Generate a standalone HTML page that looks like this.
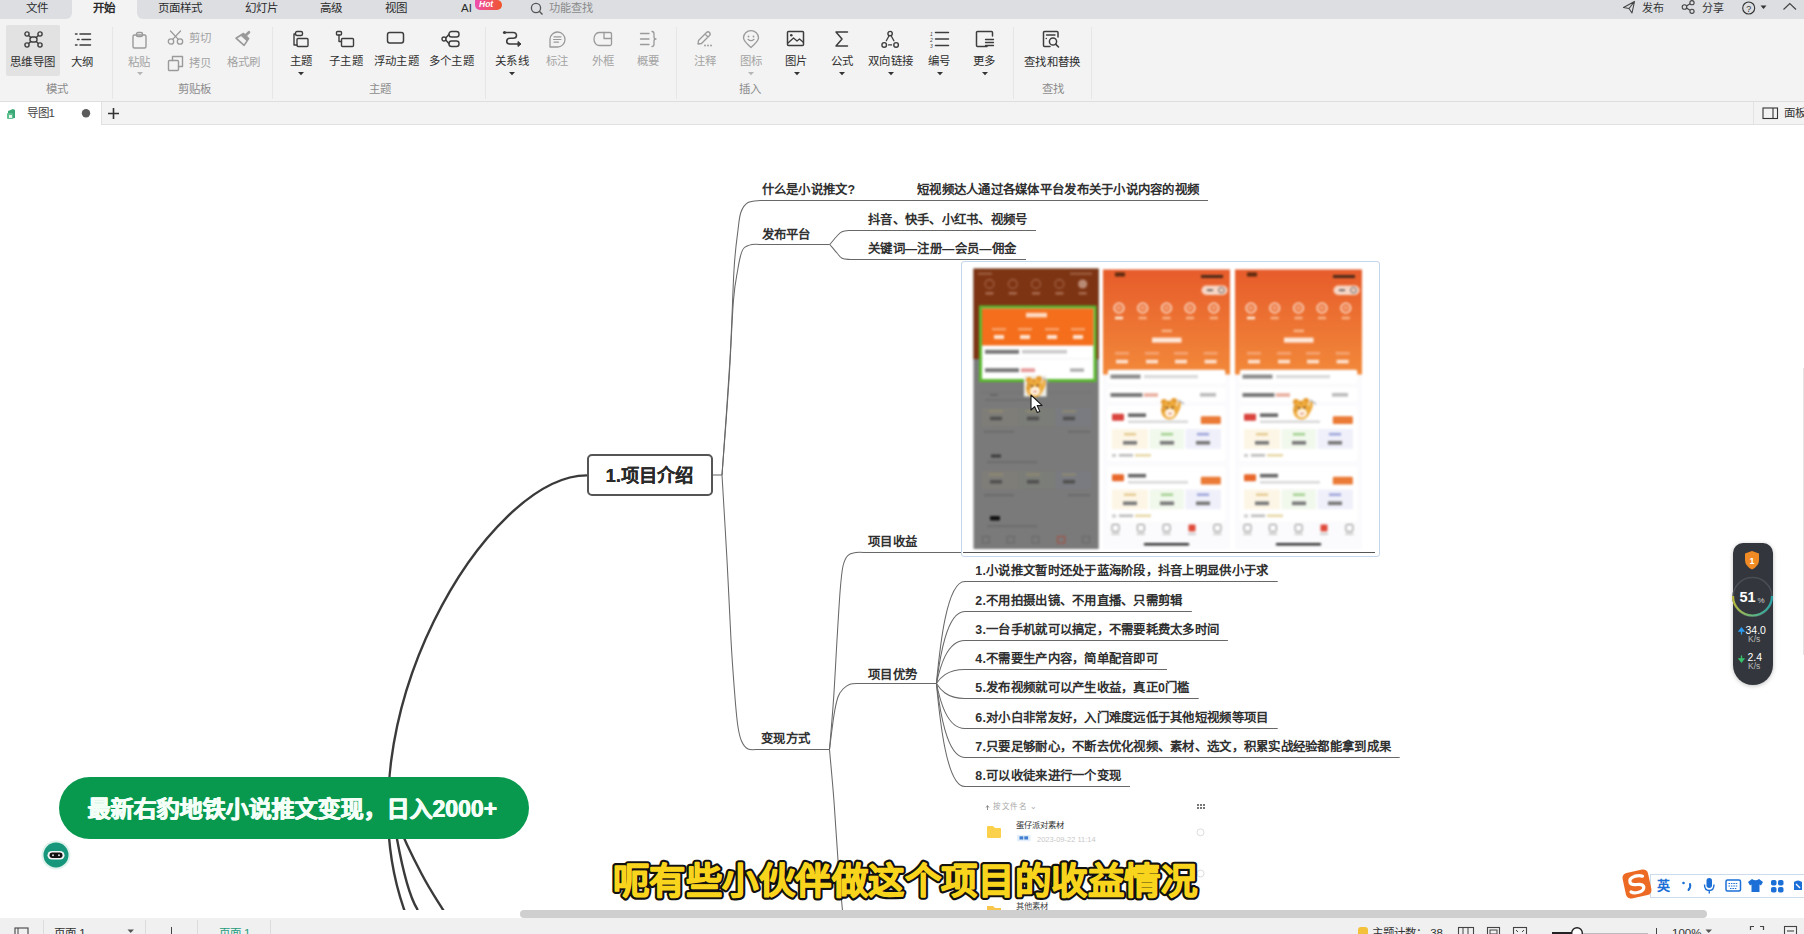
<!DOCTYPE html>
<html lang="zh-CN"><head><meta charset="utf-8"><style>*{margin:0;padding:0}
html,body{width:1804px;height:934px;overflow:hidden;background:#fff}
body{position:relative;font-family:"Liberation Sans",sans-serif}
.t{position:absolute;white-space:nowrap}
.r{position:absolute;box-sizing:border-box}
.s{position:absolute;overflow:visible}
</style></head><body>
<div class="r" style="left:0px;top:0px;width:1804px;height:19px;background:#dcdee2;"></div>
<div class="r" style="left:72px;top:0px;width:65px;height:19px;background:#f3f3f3;"></div>
<div class="r" style="left:66px;top:13px;width:6px;height:6px;background:#f3f3f3;"></div>
<div class="r" style="left:60px;top:7px;width:12px;height:12px;background:#dcdee2;border-radius:0 0 6px 0"></div>
<div class="r" style="left:137px;top:13px;width:6px;height:6px;background:#f3f3f3;"></div>
<div class="r" style="left:137px;top:7px;width:12px;height:12px;background:#dcdee2;border-radius:0 0 0 6px"></div>
<div class="t" style="left:25.5px;top:3px;font-size:11.5px;line-height:11.5px;color:#2b2b2b;font-weight:normal;">文件</div>
<div class="t" style="left:93px;top:3px;font-size:11.5px;line-height:11.5px;color:#2b2b2b;font-weight:bold;">开始</div>
<div class="t" style="left:158px;top:3px;font-size:11.5px;line-height:11.5px;color:#2b2b2b;font-weight:normal;">页面样式</div>
<div class="t" style="left:245px;top:3px;font-size:11.5px;line-height:11.5px;color:#2b2b2b;font-weight:normal;">幻灯片</div>
<div class="t" style="left:320px;top:3px;font-size:11.5px;line-height:11.5px;color:#2b2b2b;font-weight:normal;">高级</div>
<div class="t" style="left:385px;top:3px;font-size:11.5px;line-height:11.5px;color:#2b2b2b;font-weight:normal;">视图</div>
<div class="t" style="left:461px;top:3px;font-size:11.5px;line-height:11.5px;color:#2b2b2b;font-weight:normal;">AI</div>
<div class="r" style="left:475px;top:0px;width:27px;height:9.5px;background:linear-gradient(90deg,#ee4fb0,#f0552a);border-radius:0 6px 6px 6px"></div>
<div class="t" style="left:479px;top:0px;font-size:8.5px;line-height:8.5px;color:#fff;font-weight:bold;font-style:italic">Hot</div>
<svg class="s" style="left:530px;top:2px;" width="14" height="13" viewBox="0 0 14 13"><circle cx="6" cy="6" r="4.6" fill="none" stroke="#555" stroke-width="1.3"/><path d="M9.3 9.3 L12.5 12.5" stroke="#555" stroke-width="1.4"/></svg>
<div class="t" style="left:549px;top:3px;font-size:11.2px;line-height:11.2px;color:#8a8a8a;font-weight:normal;">功能查找</div>
<svg class="s" style="left:1622px;top:0px;" width="14" height="14" viewBox="0 0 14 14"><path d="M1.5 7.5 L12.5 1.5 L10 13 L7 8.5 Z M7 8.5 L12.5 1.5" fill="none" stroke="#444" stroke-width="1.1" stroke-linejoin="round"/></svg>
<div class="t" style="left:1642px;top:2.5px;font-size:11px;line-height:11px;color:#333;font-weight:normal;">发布</div>
<svg class="s" style="left:1681px;top:0px;" width="15" height="14" viewBox="0 0 15 14"><circle cx="3.5" cy="7" r="2.3" fill="none" stroke="#444" stroke-width="1.1"/><circle cx="11" cy="2.7" r="2.1" fill="none" stroke="#444" stroke-width="1.1"/><circle cx="11" cy="11.3" r="2.1" fill="none" stroke="#444" stroke-width="1.1"/><path d="M5.5 6 L9 3.8 M5.5 8 L9 10.2" stroke="#444" stroke-width="1.1"/></svg>
<div class="t" style="left:1702px;top:2.5px;font-size:11px;line-height:11px;color:#333;font-weight:normal;">分享</div>
<svg class="s" style="left:1741px;top:1px;" width="16" height="14" viewBox="0 0 16 14"><circle cx="7.7" cy="7" r="6" fill="none" stroke="#333" stroke-width="1.1"/><text x="7.7" y="10.5" font-size="9" text-anchor="middle" fill="#333" font-family="Liberation Sans">?</text></svg>
<svg class="s" style="left:1760px;top:5px;" width="8" height="5" viewBox="0 0 8 5"><path d="M0.5 0.5 H6.5 L3.5 4 Z" fill="#333"/></svg>
<svg class="s" style="left:1782px;top:2px;" width="16" height="9" viewBox="0 0 16 9"><path d="M1.5 7.5 L7.8 1.5 L14 7.5" fill="none" stroke="#444" stroke-width="1.2"/></svg>
<div class="r" style="left:0px;top:19px;width:1804px;height:82px;background:#f3f3f3;"></div>
<div class="r" style="left:0px;top:101px;width:1804px;height:1px;background:#dedede;"></div>
<div class="r" style="left:6px;top:25px;width:54px;height:51px;background:#e2e2e2;border-radius:2px"></div>
<div class="r" style="left:112px;top:27px;width:1px;height:72px;background:#e6e6e6;"></div>
<div class="r" style="left:272px;top:27px;width:1px;height:72px;background:#e6e6e6;"></div>
<div class="r" style="left:485px;top:27px;width:1px;height:72px;background:#e6e6e6;"></div>
<div class="r" style="left:676px;top:27px;width:1px;height:72px;background:#e6e6e6;"></div>
<div class="r" style="left:1013px;top:27px;width:1px;height:72px;background:#e6e6e6;"></div>
<div class="r" style="left:1091px;top:27px;width:1px;height:72px;background:#e6e6e6;"></div>
<div class="t" style="left:10px;top:56.5px;font-size:11.4px;line-height:11.4px;color:#2e2e2e;font-weight:normal;letter-spacing:0.4px;">思维导图</div>
<div class="t" style="left:71px;top:56.5px;font-size:11.4px;line-height:11.4px;color:#2e2e2e;font-weight:normal;letter-spacing:0.4px;">大纲</div>
<div class="t" style="left:128px;top:56.5px;font-size:11.4px;line-height:11.4px;color:#a3a3a3;font-weight:normal;letter-spacing:0.4px;">粘贴</div>
<div class="t" style="left:188.6px;top:33px;font-size:11.4px;line-height:11.4px;color:#a3a3a3;font-weight:normal;letter-spacing:0.4px;">剪切</div>
<div class="t" style="left:188.6px;top:58px;font-size:11.4px;line-height:11.4px;color:#a3a3a3;font-weight:normal;letter-spacing:0.4px;">拷贝</div>
<div class="t" style="left:226.6px;top:56.5px;font-size:11.4px;line-height:11.4px;color:#a3a3a3;font-weight:normal;letter-spacing:0.4px;">格式刷</div>
<div class="t" style="left:289.5px;top:56px;font-size:11.4px;line-height:11.4px;color:#2e2e2e;font-weight:normal;letter-spacing:0.4px;">主题</div>
<div class="t" style="left:329px;top:56px;font-size:11.4px;line-height:11.4px;color:#2e2e2e;font-weight:normal;letter-spacing:0.4px;">子主题</div>
<div class="t" style="left:373.7px;top:56px;font-size:11.4px;line-height:11.4px;color:#2e2e2e;font-weight:normal;letter-spacing:0.4px;">浮动主题</div>
<div class="t" style="left:428.5px;top:56px;font-size:11.4px;line-height:11.4px;color:#2e2e2e;font-weight:normal;letter-spacing:0.4px;">多个主题</div>
<div class="t" style="left:495px;top:56px;font-size:11.4px;line-height:11.4px;color:#2e2e2e;font-weight:normal;letter-spacing:0.4px;">关系线</div>
<div class="t" style="left:546px;top:56px;font-size:11.4px;line-height:11.4px;color:#a3a3a3;font-weight:normal;letter-spacing:0.4px;">标注</div>
<div class="t" style="left:591.6px;top:56px;font-size:11.4px;line-height:11.4px;color:#a3a3a3;font-weight:normal;letter-spacing:0.4px;">外框</div>
<div class="t" style="left:637px;top:56px;font-size:11.4px;line-height:11.4px;color:#a3a3a3;font-weight:normal;letter-spacing:0.4px;">概要</div>
<div class="t" style="left:694px;top:56px;font-size:11.4px;line-height:11.4px;color:#a3a3a3;font-weight:normal;letter-spacing:0.4px;">注释</div>
<div class="t" style="left:740px;top:56px;font-size:11.4px;line-height:11.4px;color:#a3a3a3;font-weight:normal;letter-spacing:0.4px;">图标</div>
<div class="t" style="left:785px;top:56px;font-size:11.4px;line-height:11.4px;color:#2e2e2e;font-weight:normal;letter-spacing:0.4px;">图片</div>
<div class="t" style="left:830.6px;top:56px;font-size:11.4px;line-height:11.4px;color:#2e2e2e;font-weight:normal;letter-spacing:0.4px;">公式</div>
<div class="t" style="left:867.8px;top:56px;font-size:11.4px;line-height:11.4px;color:#2e2e2e;font-weight:normal;letter-spacing:0.4px;">双向链接</div>
<div class="t" style="left:928px;top:56px;font-size:11.4px;line-height:11.4px;color:#2e2e2e;font-weight:normal;letter-spacing:0.4px;">编号</div>
<div class="t" style="left:973px;top:56px;font-size:11.4px;line-height:11.4px;color:#2e2e2e;font-weight:normal;letter-spacing:0.4px;">更多</div>
<div class="t" style="left:1023.8px;top:56.6px;font-size:11.4px;line-height:11.4px;color:#2e2e2e;font-weight:normal;letter-spacing:0.4px;">查找和替换</div>
<div class="t" style="left:46px;top:83.6px;font-size:11.4px;line-height:11.4px;color:#8c8c8c;font-weight:normal;letter-spacing:0.4px;">模式</div>
<div class="t" style="left:177.7px;top:83.6px;font-size:11.4px;line-height:11.4px;color:#8c8c8c;font-weight:normal;letter-spacing:0.4px;">剪贴板</div>
<div class="t" style="left:368.8px;top:83.6px;font-size:11.4px;line-height:11.4px;color:#8c8c8c;font-weight:normal;letter-spacing:0.4px;">主题</div>
<div class="t" style="left:739px;top:83.6px;font-size:11.4px;line-height:11.4px;color:#8c8c8c;font-weight:normal;letter-spacing:0.4px;">插入</div>
<div class="t" style="left:1042px;top:83.6px;font-size:11.4px;line-height:11.4px;color:#8c8c8c;font-weight:normal;letter-spacing:0.4px;">查找</div>
<svg class="s" style="left:136.5px;top:72px;" width="7" height="4" viewBox="0 0 7 4"><path d="M0 0 H6 L3 3.2 Z" fill="#b5b5b5"/></svg>
<svg class="s" style="left:298px;top:72px;" width="7" height="4" viewBox="0 0 7 4"><path d="M0 0 H6 L3 3.2 Z" fill="#333"/></svg>
<svg class="s" style="left:509px;top:72px;" width="7" height="4" viewBox="0 0 7 4"><path d="M0 0 H6 L3 3.2 Z" fill="#333"/></svg>
<svg class="s" style="left:747.5px;top:72px;" width="7" height="4" viewBox="0 0 7 4"><path d="M0 0 H6 L3 3.2 Z" fill="#b5b5b5"/></svg>
<svg class="s" style="left:793.5px;top:72px;" width="7" height="4" viewBox="0 0 7 4"><path d="M0 0 H6 L3 3.2 Z" fill="#333"/></svg>
<svg class="s" style="left:838.6px;top:72px;" width="7" height="4" viewBox="0 0 7 4"><path d="M0 0 H6 L3 3.2 Z" fill="#333"/></svg>
<svg class="s" style="left:887.7px;top:72px;" width="7" height="4" viewBox="0 0 7 4"><path d="M0 0 H6 L3 3.2 Z" fill="#333"/></svg>
<svg class="s" style="left:937px;top:72px;" width="7" height="4" viewBox="0 0 7 4"><path d="M0 0 H6 L3 3.2 Z" fill="#333"/></svg>
<svg class="s" style="left:982.4px;top:72px;" width="7" height="4" viewBox="0 0 7 4"><path d="M0 0 H6 L3 3.2 Z" fill="#333"/></svg>
<svg class="s" style="left:24px;top:31px;" width="19" height="17" viewBox="0 0 19 17"><rect x="6" y="6" width="7" height="5" rx="2.2" fill="none" stroke="#3d3d3d" stroke-width="1.4" stroke-linejoin="round" stroke-linecap="round"/><circle cx="3" cy="3" r="2.1" fill="none" stroke="#3d3d3d" stroke-width="1.4" stroke-linejoin="round" stroke-linecap="round"/><circle cx="16" cy="3" r="2.1" fill="none" stroke="#3d3d3d" stroke-width="1.4" stroke-linejoin="round" stroke-linecap="round"/><circle cx="3" cy="14" r="2.1" fill="none" stroke="#3d3d3d" stroke-width="1.4" stroke-linejoin="round" stroke-linecap="round"/><circle cx="16" cy="14" r="2.1" fill="none" stroke="#3d3d3d" stroke-width="1.4" stroke-linejoin="round" stroke-linecap="round"/><path d="M4.6 4.6 L6.8 6.6 M14.4 4.6 L12.2 6.6 M4.6 12.4 L6.8 10.4 M14.4 12.4 L12.2 10.4" fill="none" stroke="#3d3d3d" stroke-width="1.4" stroke-linejoin="round" stroke-linecap="round"/></svg>
<svg class="s" style="left:74px;top:32px;" width="18" height="15" viewBox="0 0 18 15"><path d="M1.5 2 H3 M6 2 H16.5 M3.5 7.5 H5 M8 7.5 H16.5 M1.5 13 H3 M6 13 H16.5" fill="none" stroke="#3d3d3d" stroke-width="1.5" stroke-linejoin="round" stroke-linecap="round"/></svg>
<svg class="s" style="left:131px;top:31px;" width="18" height="18" viewBox="0 0 18 18"><rect x="2" y="4" width="13" height="13" rx="1.5" fill="none" stroke="#9a9a9a" stroke-width="1.4" stroke-linejoin="round" stroke-linecap="round"/><rect x="5.5" y="1.5" width="6" height="4" rx="1.5" fill="none" stroke="#9a9a9a" stroke-width="1.4" stroke-linejoin="round" stroke-linecap="round"/></svg>
<svg class="s" style="left:167px;top:30px;" width="18" height="16" viewBox="0 0 18 16"><circle cx="4" cy="11.5" r="2.7" fill="none" stroke="#9a9a9a" stroke-width="1.3" stroke-linejoin="round" stroke-linecap="round"/><circle cx="13" cy="11.5" r="2.7" fill="none" stroke="#9a9a9a" stroke-width="1.3" stroke-linejoin="round" stroke-linecap="round"/><path d="M5.7 9.4 L13.5 1 M11.3 9.4 L3.5 1" fill="none" stroke="#9a9a9a" stroke-width="1.3" stroke-linejoin="round" stroke-linecap="round"/></svg>
<svg class="s" style="left:167px;top:55px;" width="18" height="17" viewBox="0 0 18 17"><rect x="1.5" y="5.5" width="10" height="10" rx="1" fill="none" stroke="#9a9a9a" stroke-width="1.4" stroke-linejoin="round" stroke-linecap="round"/><path d="M5.5 5.5 V1.5 H15.5 V11.5 H11.5" fill="none" stroke="#9a9a9a" stroke-width="1.4" stroke-linejoin="round" stroke-linecap="round"/></svg>
<svg class="s" style="left:234px;top:30px;" width="18" height="17" viewBox="0 0 18 17"><path d="M2 8.2 L9.5 3.5 L14.6 8.6 L10.1 15.4 Z" fill="none" stroke="#9a9a9a" stroke-width="1.7" stroke-linejoin="round"/><path d="M6.5 5.5 L9.5 3.5 L14.6 8.6 L12.8 11.3 Z" fill="#9a9a9a"/><path d="M11.5 5.5 L15 2.2" stroke="#9a9a9a" stroke-width="2.6" stroke-linecap="round"/></svg>
<svg class="s" style="left:292px;top:30px;" width="18" height="19" viewBox="0 0 18 19"><rect x="3.5" y="1.5" width="7" height="4" rx="1.5" fill="none" stroke="#3d3d3d" stroke-width="1.4" stroke-linejoin="round" stroke-linecap="round"/><path d="M3.5 4 H2 V15 H5" fill="none" stroke="#3d3d3d" stroke-width="1.4" stroke-linejoin="round" stroke-linecap="round"/><rect x="5" y="8.5" width="11" height="8" rx="1" fill="none" stroke="#3d3d3d" stroke-width="1.4" stroke-linejoin="round" stroke-linecap="round"/></svg>
<svg class="s" style="left:335px;top:30px;" width="21" height="19" viewBox="0 0 21 19"><rect x="1.5" y="1.5" width="5" height="3.5" rx="1" fill="none" stroke="#3d3d3d" stroke-width="1.4" stroke-linejoin="round" stroke-linecap="round"/><path d="M4 5 V11.5 H6.5" fill="none" stroke="#3d3d3d" stroke-width="1.4" stroke-linejoin="round" stroke-linecap="round"/><rect x="6.5" y="8.5" width="12" height="8" rx="1" fill="none" stroke="#3d3d3d" stroke-width="1.4" stroke-linejoin="round" stroke-linecap="round"/></svg>
<svg class="s" style="left:386px;top:31px;" width="19" height="14" viewBox="0 0 19 14"><rect x="1.5" y="1.5" width="16" height="10.5" rx="2.2" fill="none" stroke="#3d3d3d" stroke-width="1.5" stroke-linejoin="round" stroke-linecap="round"/></svg>
<svg class="s" style="left:441px;top:30px;" width="20" height="19" viewBox="0 0 20 19"><rect x="8" y="1.5" width="10" height="5.5" rx="2.5" fill="none" stroke="#3d3d3d" stroke-width="1.4" stroke-linejoin="round" stroke-linecap="round"/><rect x="8" y="11" width="10" height="5.5" rx="2.5" fill="none" stroke="#3d3d3d" stroke-width="1.4" stroke-linejoin="round" stroke-linecap="round"/><circle cx="3" cy="9" r="2" fill="none" stroke="#3d3d3d" stroke-width="1.4" stroke-linejoin="round" stroke-linecap="round"/><path d="M4.8 8 L8 4.3 M4.8 10 L8 13.7" fill="none" stroke="#3d3d3d" stroke-width="1.4" stroke-linejoin="round" stroke-linecap="round"/></svg>
<svg class="s" style="left:502px;top:30px;" width="21" height="18" viewBox="0 0 21 18"><circle cx="2.5" cy="2.5" r="1.6" fill="#3d3d3d"/><path d="M2.5 2.5 H11 Q14.5 2.5 14.5 5.5 Q14.5 8.3 11 8.3 H8 Q4.7 8.3 4.7 11.2 Q4.7 14 8 14 H17" fill="none" stroke="#3d3d3d" stroke-width="1.6" stroke-linejoin="round" stroke-linecap="round"/><path d="M16 11.5 L19 14 L16 16.5 Z" fill="#3d3d3d" stroke="#3d3d3d" stroke-width="1"/></svg>
<svg class="s" style="left:548px;top:30px;" width="19" height="19" viewBox="0 0 19 19"><path d="M2 17 V9 A7.5 7.5 0 1 1 9.5 17 Z" fill="none" stroke="#9a9a9a" stroke-width="1.3" stroke-linejoin="round" stroke-linecap="round"/><path d="M6 6.8 H13 M5.5 9.5 H13 M6 12.2 H10.5" fill="none" stroke="#9a9a9a" stroke-width="1.2" stroke-linejoin="round" stroke-linecap="round"/></svg>
<svg class="s" style="left:593px;top:31px;" width="20" height="16" viewBox="0 0 20 16"><path d="M6 1.5 H17 A1.5 1.5 0 0 1 18.5 3 V13 A1.5 1.5 0 0 1 17 14.5 H6 A5 6.5 0 0 1 6 1.5 Z" fill="none" stroke="#9a9a9a" stroke-width="1.3" stroke-linejoin="round" stroke-linecap="round"/><path d="M11 1.5 V7.5 H18.5" fill="none" stroke="#9a9a9a" stroke-width="1.3" stroke-linejoin="round" stroke-linecap="round"/></svg>
<svg class="s" style="left:639px;top:30px;" width="19" height="18" viewBox="0 0 19 18"><path d="M1.5 3.5 H10 M1.5 9 H10 M1.5 14.5 H10" fill="none" stroke="#9a9a9a" stroke-width="1.3" stroke-linejoin="round" stroke-linecap="round"/><path d="M13 1.5 Q15 1.5 15 4 V7 Q15 9 17 9 Q15 9 15 11 V14 Q15 16.5 13 16.5" fill="none" stroke="#9a9a9a" stroke-width="1.3" stroke-linejoin="round" stroke-linecap="round"/></svg>
<svg class="s" style="left:696px;top:30px;" width="19" height="18" viewBox="0 0 19 18"><path d="M2 14 L2.5 10.5 L10.5 2.5 Q12 1 13.5 2.5 Q15 4 13.5 5.5 L5.5 13.5 Z M9 4 L12 7" fill="none" stroke="#9a9a9a" stroke-width="1.3" stroke-linejoin="round" stroke-linecap="round"/><circle cx="9" cy="15.5" r="0.9" fill="#9a9a9a"/><circle cx="12" cy="15.5" r="0.9" fill="#9a9a9a"/><circle cx="15" cy="15.5" r="0.9" fill="#9a9a9a"/></svg>
<svg class="s" style="left:742px;top:30px;" width="18" height="19" viewBox="0 0 18 19"><path d="M9 17.5 Q1.5 11 1.5 7.8 A7.5 7.2 0 0 1 16.5 7.8 Q16.5 11 9 17.5 Z" fill="none" stroke="#9a9a9a" stroke-width="1.3" stroke-linejoin="round" stroke-linecap="round"/><circle cx="6.5" cy="6.5" r="0.9" fill="#9a9a9a"/><circle cx="11.5" cy="6.5" r="0.9" fill="#9a9a9a"/><path d="M6 9.3 Q9 12 12 9.3" fill="none" stroke="#9a9a9a" stroke-width="1.2" stroke-linejoin="round" stroke-linecap="round"/></svg>
<svg class="s" style="left:786px;top:30px;" width="19" height="17" viewBox="0 0 19 17"><rect x="1.5" y="1.5" width="16" height="14" rx="1" fill="none" stroke="#3d3d3d" stroke-width="1.5" stroke-linejoin="round" stroke-linecap="round"/><circle cx="5.3" cy="5.3" r="1.3" fill="#3d3d3d"/><path d="M2 13 L7.5 8 L11 11 L13.5 9 L17 12" fill="none" stroke="#3d3d3d" stroke-width="1.3" stroke-linejoin="round" stroke-linecap="round"/></svg>
<svg class="s" style="left:834px;top:30px;" width="15" height="18" viewBox="0 0 15 18"><path d="M13.5 2 H2 L8 9 L2 16 H13.5" fill="none" stroke="#3d3d3d" stroke-width="1.5" stroke-linejoin="round" stroke-linecap="round"/></svg>
<svg class="s" style="left:880px;top:30px;" width="21" height="18" viewBox="0 0 21 18"><circle cx="10.1" cy="3.6" r="2.2" fill="none" stroke="#3d3d3d" stroke-width="1.4" stroke-linejoin="round" stroke-linecap="round"/><circle cx="4.2" cy="14.9" r="2.3" fill="none" stroke="#3d3d3d" stroke-width="1.4" stroke-linejoin="round" stroke-linecap="round"/><circle cx="16.1" cy="14.9" r="2.3" fill="none" stroke="#3d3d3d" stroke-width="1.4" stroke-linejoin="round" stroke-linecap="round"/><path d="M8.8 6.2 L6.3 10.8 M11.4 6.2 L13.9 10.8 M8.6 14.9 H11.6" fill="none" stroke="#3d3d3d" stroke-width="1.3" stroke-linejoin="round" stroke-linecap="round"/></svg>
<svg class="s" style="left:929px;top:30px;" width="21" height="18" viewBox="0 0 21 18"><path d="M6.5 2.5 H19.5 M6.5 9 H19.5 M6.5 15.5 H19.5" fill="none" stroke="#3d3d3d" stroke-width="1.5" stroke-linejoin="round" stroke-linecap="round"/><text x="1" y="5.5" font-size="5" fill="#3d3d3d" font-family="Liberation Sans" font-style="italic">1</text><text x="1" y="11.5" font-size="5" fill="#3d3d3d" font-family="Liberation Sans" font-style="italic">2</text><text x="1" y="17.5" font-size="5" fill="#3d3d3d" font-family="Liberation Sans" font-style="italic">3</text></svg>
<svg class="s" style="left:975px;top:30px;" width="20" height="19" viewBox="0 0 20 19"><path d="M12 16.5 H2.5 A1 1 0 0 1 1.5 15.5 V2.5 A1 1 0 0 1 2.5 1.5 H16.5 A1 1 0 0 1 17.5 2.5 V6" fill="none" stroke="#3d3d3d" stroke-width="1.5" stroke-linejoin="round" stroke-linecap="round"/><path d="M10.5 9.5 H18.5 M10.5 12.5 H18.5 M10.5 15.5 H18.5" fill="none" stroke="#3d3d3d" stroke-width="1.3" stroke-linejoin="round" stroke-linecap="round"/></svg>
<svg class="s" style="left:1042px;top:30px;" width="20" height="19" viewBox="0 0 20 19"><path d="M8 16.5 H2.5 A1 1 0 0 1 1.5 15.5 V2.5 A1 1 0 0 1 2.5 1.5 H15 A1 1 0 0 1 16 2.5 V7" fill="none" stroke="#3d3d3d" stroke-width="1.5" stroke-linejoin="round" stroke-linecap="round"/><path d="M4.5 5 H13" fill="none" stroke="#3d3d3d" stroke-width="1.3" stroke-linejoin="round" stroke-linecap="round"/><circle cx="4.3" cy="8.5" r="0.8" fill="#3d3d3d"/><circle cx="11" cy="11.5" r="3.6" fill="none" stroke="#3d3d3d" stroke-width="1.5" stroke-linejoin="round" stroke-linecap="round"/><path d="M13.6 14.1 L16.5 17" fill="none" stroke="#3d3d3d" stroke-width="1.6" stroke-linejoin="round" stroke-linecap="round"/></svg>
<div class="r" style="left:0px;top:102px;width:1804px;height:22px;background:#f3f3f3;"></div>
<div class="r" style="left:0px;top:124px;width:1804px;height:1px;background:#e1e1e1;"></div>
<div class="r" style="left:0px;top:102px;width:101px;height:23px;background:#ffffff;"></div>
<div class="r" style="left:101px;top:102px;width:1px;height:23px;background:#e1e1e1;"></div>
<svg class="s" style="left:6px;top:108px;" width="11" height="12" viewBox="0 0 11 12"><path d="M2 3 L7 1 L9 2 L9 10 L2 11 Z" fill="#3aa877"/><rect x="1" y="5" width="6" height="6" rx="1" fill="#5cc08f"/><rect x="3" y="7" width="3" height="3" fill="#e8f6ee"/></svg>
<div class="t" style="left:26.5px;top:107.5px;font-size:11.5px;line-height:11.5px;color:#444;font-weight:normal;">导图1</div>
<svg class="s" style="left:81px;top:109px;" width="10" height="10" viewBox="0 0 10 10"><circle cx="5" cy="4.3" r="4.2" fill="#5c5c5c"/></svg>
<svg class="s" style="left:107px;top:107px;" width="13" height="13" viewBox="0 0 13 13"><path d="M6.5 1 V12 M1 6.5 H12" stroke="#333" stroke-width="1.6"/></svg>
<div class="r" style="left:1753px;top:102px;width:1px;height:22px;background:#e3e3e3;"></div>
<svg class="s" style="left:1762px;top:107px;" width="17" height="13" viewBox="0 0 17 13"><rect x="1" y="1" width="14.5" height="10.5" fill="none" stroke="#333" stroke-width="1.1"/><path d="M11 1 V11.5" stroke="#333" stroke-width="1.1"/></svg>
<div class="t" style="left:1784px;top:107.5px;font-size:11.5px;line-height:11.5px;color:#333;font-weight:normal;">面板</div>
<svg class="s" style="left:0;top:0;overflow:hidden" width="1804" height="909.5" viewBox="0 0 1804 909.5"><path d="M722.0,475.0 C723.3,455.7 728.0,393.2 730.0,359.0 C732.0,324.8 732.7,291.5 734.0,270.0 C735.3,248.5 736.8,239.7 738.0,230.0 C739.2,220.3 739.3,216.6 741.0,212.0 C742.7,207.4 744.8,204.4 748.0,202.5 C751.2,200.6 758.0,200.8 760.0,200.5 H1208" fill="none" stroke="#686868" stroke-width="1.05"/><path d="M722.0,475.0 C723.2,459.2 727.1,409.2 729.0,380.0 C730.9,350.8 732.0,318.3 733.5,300.0 C735.0,281.7 736.5,277.3 737.7,270.0 C738.9,262.7 739.5,259.7 740.5,256.0 C741.5,252.3 742.1,249.9 744.0,248.0 C745.9,246.1 749.0,245.1 752.0,244.5 C755.0,243.9 760.3,244.5 762.0,244.5 H829.8" fill="none" stroke="#686868" stroke-width="1.05"/><path d="M722.0,475.0 C722.8,489.2 725.5,532.5 727.0,560.0 C728.5,587.5 729.8,618.3 731.0,640.0 C732.2,661.7 733.3,675.8 734.4,690.0 C735.5,704.2 736.5,716.5 737.7,725.0 C738.9,733.5 739.8,737.0 741.5,741.0 C743.2,745.0 745.2,747.6 748.0,749.0 C750.8,750.4 756.3,749.4 758.0,749.5 H829.5" fill="none" stroke="#686868" stroke-width="1.05"/><path d="M713,475 H722" fill="none" stroke="#686868" stroke-width="1.05"/><path d="M829.8,244.5 C831.0,243.1 835.0,238.1 837.0,236.0 C839.0,233.9 839.8,232.6 842.0,231.7 C844.2,230.8 847.7,230.7 850.0,230.5 C852.3,230.3 855.0,230.5 856.0,230.5 H1036" fill="none" stroke="#686868" stroke-width="1.05"/><path d="M829.8,244.5 C831.0,245.9 835.0,250.7 837.0,253.0 C839.0,255.3 839.8,257.2 842.0,258.3 C844.2,259.4 847.7,259.3 850.0,259.5 C852.3,259.7 855.0,259.5 856.0,259.5 H1026" fill="none" stroke="#686868" stroke-width="1.05"/><path d="M829.5,749.5 C830.2,741.2 832.2,718.2 833.5,700.0 C834.8,681.8 835.9,658.3 837.0,640.0 C838.1,621.7 839.2,602.3 840.2,590.0 C841.2,577.7 841.7,571.8 843.0,566.0 C844.3,560.2 845.8,557.5 848.0,555.3 C850.2,553.0 853.0,553.0 856.0,552.5 C859.0,552.0 864.3,552.5 866.0,552.5 H1375" fill="none" stroke="#686868" stroke-width="1.05"/><path d="M829.5,749.5 C830.2,743.8 832.6,723.8 834.0,715.0 C835.4,706.2 836.5,701.3 838.0,697.0 C839.5,692.7 841.0,691.1 843.0,689.0 C845.0,686.9 847.5,685.1 850.0,684.2 C852.5,683.3 856.7,683.6 858.0,683.5 H936.4" fill="none" stroke="#686868" stroke-width="1.05"/><path d="M829.5,749.5 C830.2,757.9 832.5,781.6 833.9,800.0 C835.3,818.4 836.6,841.7 838.0,860.0 C839.4,878.3 841.6,900.5 842.4,909.7 C843.2,918.9 842.9,914.1 843.0,915.0" fill="none" stroke="#686868" stroke-width="1.05"/><path d="M936.4,683.5 C939.8,647.8 946.5,581.5 964.8,581.5 H1277.7" fill="none" stroke="#686868" stroke-width="1.05"/><path d="M936.4,683.5 C939.8,658.3 946.5,611.5 964.8,611.5 H1191.8" fill="none" stroke="#686868" stroke-width="1.05"/><path d="M936.4,683.5 C939.8,668.5 946.5,640.5 964.8,640.5 H1227.9" fill="none" stroke="#686868" stroke-width="1.05"/><path d="M936.4,683.5 C939.8,678.6 946.5,669.5 964.8,669.5 H1167" fill="none" stroke="#686868" stroke-width="1.05"/><path d="M936.4,683.5 C939.8,688.8 946.5,698.5 964.8,698.5 H1198.7" fill="none" stroke="#686868" stroke-width="1.05"/><path d="M936.4,683.5 C939.8,699.2 946.5,728.5 964.8,728.5 H1277.7" fill="none" stroke="#686868" stroke-width="1.05"/><path d="M936.4,683.5 C939.8,709.4 946.5,757.5 964.8,757.5 H1399.7" fill="none" stroke="#686868" stroke-width="1.05"/><path d="M936.4,683.5 C939.8,719.5 946.5,786.5 964.8,786.5 H1130" fill="none" stroke="#686868" stroke-width="1.05"/><path d="M587,475.4 C487.75,475.4 338.88,719.97 403.8,908.6 L407,918" fill="none" stroke="#3a3a3a" stroke-width="2.4"/><path d="M389.1,780 C388.3,789.9 401.4,883.1 417,908.6 L420,918" fill="none" stroke="#3a3a3a" stroke-width="2.4"/><path d="M389.1,780 C388.4,805 401,835 421.4,873.5 C430,890 437,900 442.3,908.6 L447,916" fill="none" stroke="#3a3a3a" stroke-width="2.4"/></svg>
<div class="r" style="left:587px;top:453.5px;width:126px;height:42px;border:2px solid #555;border-radius:5px;background:#fff"></div>
<div class="t" style="left:605.5px;top:466.5px;font-size:18.3px;line-height:18.3px;color:#2a2a2a;font-weight:bold;text-shadow:0.35px 0 0 #2a2a2a">1.项目介绍</div>
<div class="t" style="left:761.5px;top:184.4px;font-size:12.4px;line-height:12.4px;color:#303030;font-weight:bold;letter-spacing:0.27px;">什么是小说推文?</div>
<div class="t" style="left:917px;top:184.4px;font-size:12.4px;line-height:12.4px;color:#303030;font-weight:bold;letter-spacing:0.27px;">短视频达人通过各媒体平台发布关于小说内容的视频</div>
<div class="t" style="left:761.5px;top:228.9px;font-size:12.4px;line-height:12.4px;color:#303030;font-weight:bold;letter-spacing:0.27px;">发布平台</div>
<div class="t" style="left:868px;top:213.5px;font-size:12.4px;line-height:12.4px;color:#303030;font-weight:bold;letter-spacing:0.27px;">抖音、快手、小红书、视频号</div>
<div class="t" style="left:868px;top:243.0px;font-size:12.4px;line-height:12.4px;color:#303030;font-weight:bold;letter-spacing:0.27px;">关键词—注册—会员—佣金</div>
<div class="t" style="left:868px;top:536.4px;font-size:12.4px;line-height:12.4px;color:#303030;font-weight:bold;letter-spacing:0.27px;">项目收益</div>
<div class="t" style="left:868px;top:668.9px;font-size:12.4px;line-height:12.4px;color:#303030;font-weight:bold;letter-spacing:0.27px;">项目优势</div>
<div class="t" style="left:761px;top:732.9px;font-size:12.4px;line-height:12.4px;color:#303030;font-weight:bold;letter-spacing:0.27px;">变现方式</div>
<div class="t" style="left:975.3px;top:565.2px;font-size:12.4px;line-height:12.4px;color:#303030;font-weight:bold;letter-spacing:0.27px;">1.小说推文暂时还处于蓝海阶段，抖音上明显供小于求</div>
<div class="t" style="left:975.3px;top:595.2px;font-size:12.4px;line-height:12.4px;color:#303030;font-weight:bold;letter-spacing:0.27px;">2.不用拍摄出镜、不用直播、只需剪辑</div>
<div class="t" style="left:975.3px;top:624.2px;font-size:12.4px;line-height:12.4px;color:#303030;font-weight:bold;letter-spacing:0.27px;">3.一台手机就可以搞定，不需要耗费太多时间</div>
<div class="t" style="left:975.3px;top:653.2px;font-size:12.4px;line-height:12.4px;color:#303030;font-weight:bold;letter-spacing:0.27px;">4.不需要生产内容，简单配音即可</div>
<div class="t" style="left:975.3px;top:682.2px;font-size:12.4px;line-height:12.4px;color:#303030;font-weight:bold;letter-spacing:0.27px;">5.发布视频就可以产生收益，真正0门槛</div>
<div class="t" style="left:975.3px;top:712.2px;font-size:12.4px;line-height:12.4px;color:#303030;font-weight:bold;letter-spacing:0.27px;">6.对小白非常友好，入门难度远低于其他短视频等项目</div>
<div class="t" style="left:975.3px;top:741.2px;font-size:12.4px;line-height:12.4px;color:#303030;font-weight:bold;letter-spacing:0.27px;">7.只要足够耐心，不断去优化视频、素材、选文，积累实战经验都能拿到成果</div>
<div class="t" style="left:975.3px;top:770.2px;font-size:12.4px;line-height:12.4px;color:#303030;font-weight:bold;letter-spacing:0.27px;">8.可以收徒来进行一个变现</div>
<div class="r" style="left:961.4px;top:260.6px;width:419px;height:296px;background:#ffffff;border:1.8px solid #c3d6ec;border-radius:3px"></div>
<svg class="s" style="left:960px;top:260px;filter:blur(0.8px)" width="425" height="300" viewBox="960 260 425 300"><defs><linearGradient id="og" x1="0" y1="0" x2="0" y2="1"><stop offset="0" stop-color="#e75c2b"/><stop offset="1" stop-color="#f2893a"/></linearGradient><filter id="bl" x="-5%" y="-5%" width="110%" height="110%"><feGaussianBlur stdDeviation="0.7"/></filter></defs><g><rect x="973.5" y="268.6" width="125.2" height="280.4" fill="#7a7a7a"/><rect x="973.5" y="268.6" width="125.2" height="90.5" fill="#7d3413"/><rect x="978" y="272.5" width="14" height="2.5" fill="#9a5a3c"/><rect x="1070" y="272.5" width="22" height="2.5" fill="#9a5a3c"/><circle cx="989.5" cy="284" r="4.4" fill="none" stroke="#a8694c" stroke-width="1.1"/><rect x="985.5" y="292" width="8" height="2.6" fill="#a8694c"/><circle cx="1012.8" cy="284" r="4.4" fill="none" stroke="#a8694c" stroke-width="1.1"/><rect x="1008.8" y="292" width="8" height="2.6" fill="#a8694c"/><circle cx="1036" cy="284" r="4.4" fill="none" stroke="#a8694c" stroke-width="1.1"/><rect x="1032" y="292" width="8" height="2.6" fill="#a8694c"/><circle cx="1059.4" cy="284" r="4.4" fill="none" stroke="#a8694c" stroke-width="1.1"/><rect x="1055.4" y="292" width="8" height="2.6" fill="#a8694c"/><circle cx="1082.7" cy="284" r="4.6" fill="#b98a74"/><rect x="1078.7" y="292" width="8" height="2.6" fill="#a8694c"/><rect x="980.5" y="307" width="114.5" height="73.5" fill="#ffffff" stroke="#5ab82e" stroke-width="3"/><rect x="982" y="308.5" width="111.5" height="37" fill="#f46e1c"/><rect x="1026" y="312.8" width="21" height="4.6" fill="#ffd9c2"/><rect x="992" y="328" width="14" height="2.4" fill="#f9a26c"/><rect x="994" y="335" width="10" height="4" fill="#ffe2cf"/><rect x="1018" y="328" width="14" height="2.4" fill="#f9a26c"/><rect x="1020" y="335" width="10" height="4" fill="#ffe2cf"/><rect x="1045" y="328" width="14" height="2.4" fill="#f9a26c"/><rect x="1047" y="335" width="10" height="4" fill="#ffe2cf"/><rect x="1071" y="328" width="14" height="2.4" fill="#f9a26c"/><rect x="1073" y="335" width="10" height="4" fill="#ffe2cf"/><rect x="985" y="349.8" width="34" height="4" fill="#777"/><rect x="1022" y="350" width="45" height="3.5" fill="#c9c9c9"/><rect x="982" y="358.5" width="111.5" height="0.8" fill="#eee"/><rect x="985" y="368.2" width="34" height="4" fill="#777"/><rect x="1021" y="368.3" width="14" height="3.8" fill="#e79b9b"/><rect x="1070" y="368.5" width="14" height="3.2" fill="#aaa"/><rect x="981" y="392" width="112" height="1" fill="#737373"/><rect x="990" y="394" width="8" height="2" fill="#666"/><rect x="985" y="399" width="50" height="2" fill="#707070"/><rect x="982" y="407.7" width="36" height="19" fill="#7f7d78"/><rect x="1019" y="407.7" width="36" height="19" fill="#7b7d78"/><rect x="1056" y="407.7" width="35" height="19" fill="#7a7b80"/><rect x="989" y="410.2" width="14" height="2" fill="#8f8a70"/><rect x="990" y="416.7" width="12" height="3.5" fill="#4f4f4f"/><rect x="1026" y="410.2" width="14" height="2" fill="#8f8a70"/><rect x="1027" y="416.7" width="12" height="3.5" fill="#4f4f4f"/><rect x="1062" y="410.2" width="14" height="2" fill="#8f8a70"/><rect x="1063" y="416.7" width="12" height="3.5" fill="#4f4f4f"/><rect x="984" y="430.7" width="30" height="2.2" fill="#6c6c6c"/><rect x="1068" y="430.7" width="22" height="2.2" fill="#6c6c6c"/><rect x="982" y="471" width="36" height="18" fill="#7f7d78"/><rect x="1019" y="471" width="36" height="18" fill="#7b7d78"/><rect x="1056" y="471" width="35" height="18" fill="#7a7b80"/><rect x="989" y="473.5" width="14" height="2" fill="#8f8a70"/><rect x="990" y="480" width="12" height="3.5" fill="#4f4f4f"/><rect x="1026" y="473.5" width="14" height="2" fill="#8f8a70"/><rect x="1027" y="480" width="12" height="3.5" fill="#4f4f4f"/><rect x="1062" y="473.5" width="14" height="2" fill="#8f8a70"/><rect x="1063" y="480" width="12" height="3.5" fill="#4f4f4f"/><rect x="984" y="494" width="30" height="2.2" fill="#6c6c6c"/><rect x="1068" y="494" width="22" height="2.2" fill="#6c6c6c"/><rect x="991" y="454.5" width="10" height="3" fill="#3c3c3c"/><rect x="987" y="461" width="50" height="2.2" fill="#6d6d6d"/><rect x="990" y="516" width="10" height="4.5" rx="1" fill="#111"/><rect x="987" y="525" width="50" height="2.2" fill="#6d6d6d"/><rect x="982.3" y="536.5" width="7" height="6.5" fill="none" stroke="#666" stroke-width="1"/><rect x="1007.2" y="536.5" width="7" height="6.5" fill="none" stroke="#666" stroke-width="1"/><rect x="1032.0" y="536.5" width="7" height="6.5" fill="none" stroke="#666" stroke-width="1"/><rect x="1057.7" y="536.5" width="7" height="6.5" fill="none" stroke="#a84a3a" stroke-width="1"/><rect x="1082.5" y="536.5" width="7" height="6.5" fill="none" stroke="#666" stroke-width="1"/><rect x="1024" y="375.5" width="22.5" height="21" fill="#f0efe9"/><g transform="translate(1024,375)"><circle cx="5" cy="5" r="3" fill="#e79a2e"/><circle cx="15" cy="4" r="3" fill="#e79a2e"/><ellipse cx="10.5" cy="13" rx="8.5" ry="9.5" fill="#eeaa3c"/><ellipse cx="11" cy="16" rx="5" ry="4.5" fill="#fff3e2"/><circle cx="8" cy="11" r="0.9" fill="#402010"/><circle cx="13.5" cy="10.5" r="0.9" fill="#402010"/><path d="M9 16 Q11 18.5 13 16" fill="#d0503a"/><path d="M3.5 9 L6 10 M3 13 L5.5 13.5 M9.5 4.5 L10 7" stroke="#b0651a" stroke-width="0.9"/><path d="M17.5 15 Q21 10 20 6" stroke="#eeaa3c" stroke-width="3.2" fill="none" stroke-linecap="round"/><path d="M19 3 L25 7" stroke="#a0a0a8" stroke-width="1.2"/></g><rect x="1103" y="269.5" width="127" height="279.5" fill="#fbfbfd"/><rect x="1103" y="269.5" width="127" height="105" fill="url(#og)"/><rect x="1115" y="272.5" width="10" height="4" fill="#5a2a10"/><rect x="1201" y="275" width="22" height="3" fill="#4a2a1a"/><rect x="1201.5" y="285.5" width="26" height="9.5" rx="4.75" fill="#f7d6c6"/><rect x="1207" y="289.5" width="6" height="1.5" fill="#444"/><circle cx="1221.5" cy="290.2" r="2.8" fill="none" stroke="#555" stroke-width="1"/><circle cx="1119" cy="308" r="4.8" fill="none" stroke="#fff4ec" stroke-width="1.3"/><rect x="1117.5" y="306.5" width="3" height="3" fill="none" stroke="#fde6d6" stroke-width="0.7"/><rect x="1115" y="316.8" width="8" height="2.4" fill="#fff0e0"/><circle cx="1142.7" cy="308" r="4.8" fill="none" stroke="#fff4ec" stroke-width="1.3"/><rect x="1141.2" y="306.5" width="3" height="3" fill="none" stroke="#fde6d6" stroke-width="0.7"/><rect x="1138.7" y="316.8" width="8" height="2.4" fill="#f9b58a"/><circle cx="1166.5" cy="308" r="4.8" fill="none" stroke="#fff4ec" stroke-width="1.3"/><rect x="1165.0" y="306.5" width="3" height="3" fill="none" stroke="#fde6d6" stroke-width="0.7"/><rect x="1162.5" y="316.8" width="8" height="2.4" fill="#f9b58a"/><circle cx="1190" cy="308" r="4.8" fill="none" stroke="#fff4ec" stroke-width="1.3"/><rect x="1188.5" y="306.5" width="3" height="3" fill="none" stroke="#fde6d6" stroke-width="0.7"/><rect x="1186" y="316.8" width="8" height="2.4" fill="#f9b58a"/><circle cx="1213.8" cy="308" r="4.8" fill="none" stroke="#fff4ec" stroke-width="1.3"/><rect x="1212.3" y="306.5" width="3" height="3" fill="none" stroke="#fde6d6" stroke-width="0.7"/><rect x="1209.8" y="316.8" width="8" height="2.4" fill="#f9b58a"/><rect x="1161.6" y="329.7" width="10.4" height="2.4" fill="#f9b58a"/><rect x="1152" y="337.6" width="29.5" height="5" fill="#ffe8da"/><rect x="1115" y="352" width="14" height="2.5" fill="#f6a676"/><rect x="1116" y="359.8" width="12" height="3.6" fill="#ffe2cf"/><rect x="1145" y="352" width="14" height="2.5" fill="#f6a676"/><rect x="1146" y="359.8" width="12" height="3.6" fill="#ffe2cf"/><rect x="1174" y="352" width="14" height="2.5" fill="#f6a676"/><rect x="1175" y="359.8" width="12" height="3.6" fill="#ffe2cf"/><rect x="1203.6" y="352" width="14" height="2.5" fill="#f6a676"/><rect x="1204.6" y="359.8" width="12" height="3.6" fill="#ffe2cf"/><rect x="1107.8" y="369.8" width="117.5" height="13.7" rx="2" fill="#ffffff"/><rect x="1110.5" y="374.6" width="30" height="4" fill="#8a8a8a"/><rect x="1144" y="375" width="54" height="3.3" fill="#dadada"/><rect x="1107.8" y="387.5" width="117.5" height="14" rx="2" fill="#ffffff"/><rect x="1110.5" y="393" width="32" height="4" fill="#7a7a7a"/><rect x="1144" y="393.2" width="14" height="3.6" fill="#eab0a0"/><rect x="1200" y="393" width="16" height="3.6" fill="#bbb"/><rect x="1107.8" y="406" width="117.5" height="55" rx="2" fill="#ffffff"/><rect x="1112" y="413.7" width="12" height="7" rx="1" fill="#d9443d"/><rect x="1128" y="413.4" width="18" height="3.6" fill="#666"/><rect x="1128" y="420.5" width="60" height="2.5" fill="#d8d8d8"/><rect x="1200.8" y="416.3" width="20" height="7.8" rx="1.2" fill="#ea7a35"/><rect x="1112" y="429" width="36" height="19.8" fill="#fdf6e6"/><rect x="1149.8" y="429" width="34.2" height="19.8" fill="#f1f8ec"/><rect x="1185.7" y="429" width="35.2" height="19.8" fill="#eff0fa"/><rect x="1124" y="433" width="12" height="2.4" fill="#e5c98f"/><rect x="1123" y="441" width="14" height="3.6" fill="#777"/><rect x="1161" y="433" width="12" height="2.4" fill="#9fcf8c"/><rect x="1160" y="441" width="14" height="3.6" fill="#777"/><rect x="1197" y="433" width="12" height="2.4" fill="#9aa0d8"/><rect x="1196" y="441" width="14" height="3.6" fill="#777"/><rect x="1112" y="454" width="4" height="3" fill="#ccc"/><rect x="1119" y="454" width="14" height="2.6" fill="#bbb"/><rect x="1135" y="454" width="16" height="2.6" fill="#e8d9a8"/><rect x="1107.8" y="466.5" width="117.5" height="55" rx="2" fill="#ffffff"/><rect x="1112" y="474.2" width="12" height="7" rx="1" fill="#e8672a"/><rect x="1128" y="473.9" width="18" height="3.6" fill="#666"/><rect x="1128" y="481.0" width="60" height="2.5" fill="#d8d8d8"/><rect x="1200.8" y="476.8" width="20" height="7.8" rx="1.2" fill="#ea7a35"/><rect x="1112" y="489.5" width="36" height="19.8" fill="#fdf6e6"/><rect x="1149.8" y="489.5" width="34.2" height="19.8" fill="#f1f8ec"/><rect x="1185.7" y="489.5" width="35.2" height="19.8" fill="#eff0fa"/><rect x="1124" y="493.5" width="12" height="2.4" fill="#e5c98f"/><rect x="1123" y="501.5" width="14" height="3.6" fill="#777"/><rect x="1161" y="493.5" width="12" height="2.4" fill="#9fcf8c"/><rect x="1160" y="501.5" width="14" height="3.6" fill="#777"/><rect x="1197" y="493.5" width="12" height="2.4" fill="#9aa0d8"/><rect x="1196" y="501.5" width="14" height="3.6" fill="#777"/><rect x="1112" y="514.5" width="4" height="3" fill="#ccc"/><rect x="1119" y="514.5" width="14" height="2.6" fill="#bbb"/><rect x="1135" y="514.5" width="16" height="2.6" fill="#e8d9a8"/><rect x="1112.0" y="524.5" width="7" height="7" rx="1" fill="none" stroke="#8a8a8a" stroke-width="1"/><rect x="1111.5" y="533" width="8" height="2" fill="#cfcfcf"/><rect x="1137.4" y="524.5" width="7" height="7" rx="1" fill="none" stroke="#8a8a8a" stroke-width="1"/><rect x="1136.9" y="533" width="8" height="2" fill="#cfcfcf"/><rect x="1163.1" y="524.5" width="7" height="7" rx="1" fill="none" stroke="#8a8a8a" stroke-width="1"/><rect x="1162.6" y="533" width="8" height="2" fill="#cfcfcf"/><rect x="1188.5" y="524.5" width="7" height="7" rx="1" fill="#e04a3a"/><rect x="1188" y="533" width="8" height="2" fill="#cfcfcf"/><rect x="1213.9" y="524.5" width="7" height="7" rx="1" fill="none" stroke="#8a8a8a" stroke-width="1"/><rect x="1213.4" y="533" width="8" height="2" fill="#cfcfcf"/><rect x="1143.8" y="543" width="45.4" height="2.6" rx="1.3" fill="#333"/><g transform="translate(1159,397)"><circle cx="5" cy="5" r="3" fill="#e79a2e"/><circle cx="15" cy="4" r="3" fill="#e79a2e"/><ellipse cx="10.5" cy="13" rx="8.5" ry="9.5" fill="#eeaa3c"/><ellipse cx="11" cy="16" rx="5" ry="4.5" fill="#fff3e2"/><circle cx="8" cy="11" r="0.9" fill="#402010"/><circle cx="13.5" cy="10.5" r="0.9" fill="#402010"/><path d="M9 16 Q11 18.5 13 16" fill="#d0503a"/><path d="M3.5 9 L6 10 M3 13 L5.5 13.5 M9.5 4.5 L10 7" stroke="#b0651a" stroke-width="0.9"/><path d="M17.5 15 Q21 10 20 6" stroke="#eeaa3c" stroke-width="3.2" fill="none" stroke-linecap="round"/><path d="M19 3 L25 7" stroke="#a0a0a8" stroke-width="1.2"/></g><rect x="1235" y="269.5" width="127" height="279.5" fill="#fbfbfd"/><rect x="1235" y="269.5" width="127" height="105" fill="url(#og)"/><rect x="1247" y="272.5" width="10" height="4" fill="#5a2a10"/><rect x="1333" y="275" width="22" height="3" fill="#4a2a1a"/><rect x="1333.5" y="285.5" width="26" height="9.5" rx="4.75" fill="#f7d6c6"/><rect x="1339" y="289.5" width="6" height="1.5" fill="#444"/><circle cx="1353.5" cy="290.2" r="2.8" fill="none" stroke="#555" stroke-width="1"/><circle cx="1251" cy="308" r="4.8" fill="none" stroke="#fff4ec" stroke-width="1.3"/><rect x="1249.5" y="306.5" width="3" height="3" fill="none" stroke="#fde6d6" stroke-width="0.7"/><rect x="1247" y="316.8" width="8" height="2.4" fill="#fff0e0"/><circle cx="1274.7" cy="308" r="4.8" fill="none" stroke="#fff4ec" stroke-width="1.3"/><rect x="1273.2" y="306.5" width="3" height="3" fill="none" stroke="#fde6d6" stroke-width="0.7"/><rect x="1270.7" y="316.8" width="8" height="2.4" fill="#f9b58a"/><circle cx="1298.5" cy="308" r="4.8" fill="none" stroke="#fff4ec" stroke-width="1.3"/><rect x="1297.0" y="306.5" width="3" height="3" fill="none" stroke="#fde6d6" stroke-width="0.7"/><rect x="1294.5" y="316.8" width="8" height="2.4" fill="#f9b58a"/><circle cx="1322" cy="308" r="4.8" fill="none" stroke="#fff4ec" stroke-width="1.3"/><rect x="1320.5" y="306.5" width="3" height="3" fill="none" stroke="#fde6d6" stroke-width="0.7"/><rect x="1318" y="316.8" width="8" height="2.4" fill="#f9b58a"/><circle cx="1345.8" cy="308" r="4.8" fill="none" stroke="#fff4ec" stroke-width="1.3"/><rect x="1344.3" y="306.5" width="3" height="3" fill="none" stroke="#fde6d6" stroke-width="0.7"/><rect x="1341.8" y="316.8" width="8" height="2.4" fill="#f9b58a"/><rect x="1293.6" y="329.7" width="10.4" height="2.4" fill="#f9b58a"/><rect x="1284" y="337.6" width="29.5" height="5" fill="#ffe8da"/><rect x="1247" y="352" width="14" height="2.5" fill="#f6a676"/><rect x="1248" y="359.8" width="12" height="3.6" fill="#ffe2cf"/><rect x="1277" y="352" width="14" height="2.5" fill="#f6a676"/><rect x="1278" y="359.8" width="12" height="3.6" fill="#ffe2cf"/><rect x="1306" y="352" width="14" height="2.5" fill="#f6a676"/><rect x="1307" y="359.8" width="12" height="3.6" fill="#ffe2cf"/><rect x="1335.6" y="352" width="14" height="2.5" fill="#f6a676"/><rect x="1336.6" y="359.8" width="12" height="3.6" fill="#ffe2cf"/><rect x="1239.8" y="369.8" width="117.5" height="13.7" rx="2" fill="#ffffff"/><rect x="1242.5" y="374.6" width="30" height="4" fill="#8a8a8a"/><rect x="1276" y="375" width="54" height="3.3" fill="#dadada"/><rect x="1239.8" y="387.5" width="117.5" height="14" rx="2" fill="#ffffff"/><rect x="1242.5" y="393" width="32" height="4" fill="#7a7a7a"/><rect x="1276" y="393.2" width="14" height="3.6" fill="#eab0a0"/><rect x="1332" y="393" width="16" height="3.6" fill="#bbb"/><rect x="1239.8" y="406" width="117.5" height="55" rx="2" fill="#ffffff"/><rect x="1244" y="413.7" width="12" height="7" rx="1" fill="#d9443d"/><rect x="1260" y="413.4" width="18" height="3.6" fill="#666"/><rect x="1260" y="420.5" width="60" height="2.5" fill="#d8d8d8"/><rect x="1332.8" y="416.3" width="20" height="7.8" rx="1.2" fill="#ea7a35"/><rect x="1244" y="429" width="36" height="19.8" fill="#fdf6e6"/><rect x="1281.8" y="429" width="34.2" height="19.8" fill="#f1f8ec"/><rect x="1317.7" y="429" width="35.2" height="19.8" fill="#eff0fa"/><rect x="1256" y="433" width="12" height="2.4" fill="#e5c98f"/><rect x="1255" y="441" width="14" height="3.6" fill="#777"/><rect x="1293" y="433" width="12" height="2.4" fill="#9fcf8c"/><rect x="1292" y="441" width="14" height="3.6" fill="#777"/><rect x="1329" y="433" width="12" height="2.4" fill="#9aa0d8"/><rect x="1328" y="441" width="14" height="3.6" fill="#777"/><rect x="1244" y="454" width="4" height="3" fill="#ccc"/><rect x="1251" y="454" width="14" height="2.6" fill="#bbb"/><rect x="1267" y="454" width="16" height="2.6" fill="#e8d9a8"/><rect x="1239.8" y="466.5" width="117.5" height="55" rx="2" fill="#ffffff"/><rect x="1244" y="474.2" width="12" height="7" rx="1" fill="#e8672a"/><rect x="1260" y="473.9" width="18" height="3.6" fill="#666"/><rect x="1260" y="481.0" width="60" height="2.5" fill="#d8d8d8"/><rect x="1332.8" y="476.8" width="20" height="7.8" rx="1.2" fill="#ea7a35"/><rect x="1244" y="489.5" width="36" height="19.8" fill="#fdf6e6"/><rect x="1281.8" y="489.5" width="34.2" height="19.8" fill="#f1f8ec"/><rect x="1317.7" y="489.5" width="35.2" height="19.8" fill="#eff0fa"/><rect x="1256" y="493.5" width="12" height="2.4" fill="#e5c98f"/><rect x="1255" y="501.5" width="14" height="3.6" fill="#777"/><rect x="1293" y="493.5" width="12" height="2.4" fill="#9fcf8c"/><rect x="1292" y="501.5" width="14" height="3.6" fill="#777"/><rect x="1329" y="493.5" width="12" height="2.4" fill="#9aa0d8"/><rect x="1328" y="501.5" width="14" height="3.6" fill="#777"/><rect x="1244" y="514.5" width="4" height="3" fill="#ccc"/><rect x="1251" y="514.5" width="14" height="2.6" fill="#bbb"/><rect x="1267" y="514.5" width="16" height="2.6" fill="#e8d9a8"/><rect x="1244.0" y="524.5" width="7" height="7" rx="1" fill="none" stroke="#8a8a8a" stroke-width="1"/><rect x="1243.5" y="533" width="8" height="2" fill="#cfcfcf"/><rect x="1269.4" y="524.5" width="7" height="7" rx="1" fill="none" stroke="#8a8a8a" stroke-width="1"/><rect x="1268.9" y="533" width="8" height="2" fill="#cfcfcf"/><rect x="1295.1" y="524.5" width="7" height="7" rx="1" fill="none" stroke="#8a8a8a" stroke-width="1"/><rect x="1294.6" y="533" width="8" height="2" fill="#cfcfcf"/><rect x="1320.5" y="524.5" width="7" height="7" rx="1" fill="#e04a3a"/><rect x="1320" y="533" width="8" height="2" fill="#cfcfcf"/><rect x="1345.9" y="524.5" width="7" height="7" rx="1" fill="none" stroke="#8a8a8a" stroke-width="1"/><rect x="1345.4" y="533" width="8" height="2" fill="#cfcfcf"/><rect x="1275.8" y="543" width="45.4" height="2.6" rx="1.3" fill="#333"/><g transform="translate(1291,397)"><circle cx="5" cy="5" r="3" fill="#e79a2e"/><circle cx="15" cy="4" r="3" fill="#e79a2e"/><ellipse cx="10.5" cy="13" rx="8.5" ry="9.5" fill="#eeaa3c"/><ellipse cx="11" cy="16" rx="5" ry="4.5" fill="#fff3e2"/><circle cx="8" cy="11" r="0.9" fill="#402010"/><circle cx="13.5" cy="10.5" r="0.9" fill="#402010"/><path d="M9 16 Q11 18.5 13 16" fill="#d0503a"/><path d="M3.5 9 L6 10 M3 13 L5.5 13.5 M9.5 4.5 L10 7" stroke="#b0651a" stroke-width="0.9"/><path d="M17.5 15 Q21 10 20 6" stroke="#eeaa3c" stroke-width="3.2" fill="none" stroke-linecap="round"/><path d="M19 3 L25 7" stroke="#a0a0a8" stroke-width="1.2"/></g></g></svg>
<svg class="s" style="left:1028px;top:393px;filter:blur(0.3px)" width="16" height="22" viewBox="0 0 16 22"><path d="M3 2 L3 17 L6.6 13.6 L9.3 19.5 L11.8 18.4 L9.2 12.6 L14 12.4 Z" fill="#fff" stroke="#1a1a1a" stroke-width="1.1" stroke-linejoin="round"/></svg>
<div class="r" style="left:963px;top:552px;width:412px;height:1px;background:#555;"></div>
<div class="r" style="left:0;top:0;width:1804px;height:909.5px;overflow:hidden"><div class="r" style="left:0;top:0;width:1804px;height:934px">
<svg class="s" style="left:0;top:0" width="1804" height="934" viewBox="0 0 1804 934"><path d="M987.5 806 L987.5 810 M986 807.5 L987.5 805.5 L989 807.5" stroke="#777" stroke-width="0.8" fill="none"/><path d="M1197 804 h2 v2 h-2z M1200 804 h2 v2 h-2z M1203 804 h2 v2 h-2z M1197 807 h2 v2 h-2z M1200 807 h2 v2 h-2z M1203 807 h2 v2 h-2z" fill="#777"/><path d="M988 826 H993 L995 828 H1000 Q1001 828 1001 829 V837 Q1001 838 1000 838 H988 Q987 838 987 837 V827 Q987 826 988 826 Z" fill="#fbd04a"/><rect x="1017" y="834.8" width="13.6" height="6.5" fill="#e3eefa"/><rect x="1019.5" y="836.3" width="3.8" height="3.2" fill="#3f7fd0"/><rect x="1024.3" y="836.3" width="3.8" height="3.2" fill="#3f7fd0"/><circle cx="1200.5" cy="832.3" r="3.5" fill="none" stroke="#ddd" stroke-width="1"/><circle cx="1200.5" cy="873.5" r="3.5" fill="none" stroke="#ddd" stroke-width="1"/><path d="M987 906 H993 L995 908 H1001 V918 H987 Z" fill="#f7c64a"/></svg>
<div class="t" style="left:993px;top:802.5px;font-size:7.5px;line-height:7.5px;color:#aaa;font-weight:normal;font-family:Liberation Serif,serif;letter-spacing:1.5px">按文件名 ⌄</div>
<div class="t" style="left:1015.8px;top:821.5px;font-size:8.3px;line-height:8.3px;color:#333;font-weight:normal;font-family:Liberation Serif,serif">蛋仔派对素材</div>
<div class="t" style="left:1037px;top:835.5px;font-size:7.5px;line-height:7.5px;color:#c8c8c8;font-weight:normal;">2023-09-22  11:14</div>
<div class="t" style="left:1015.8px;top:902.5px;font-size:8.3px;line-height:8.3px;color:#444;font-weight:normal;font-family:Liberation Serif,serif">其他素材</div>
</div></div>
<div class="r" style="left:0px;top:918px;width:1804px;height:16px;background:#f0f0f0;"></div>
<div class="r" style="left:520px;top:909.5px;width:1187px;height:8.5px;background:#cfcfcf;border-radius:4px"></div>
<svg class="s" style="left:13px;top:926px;" width="18" height="10" viewBox="0 0 18 10"><rect x="2" y="2" width="13" height="12" fill="none" stroke="#444" stroke-width="1.1"/><path d="M5 2 V14" stroke="#444" stroke-width="1"/></svg>
<div class="r" style="left:43px;top:920px;width:1px;height:14px;background:#dcdcdc;"></div>
<div class="r" style="left:144.7px;top:920px;width:1px;height:14px;background:#dcdcdc;"></div>
<div class="r" style="left:197px;top:920px;width:1px;height:14px;background:#dcdcdc;"></div>
<div class="r" style="left:270px;top:920px;width:1px;height:14px;background:#dcdcdc;"></div>
<div class="t" style="left:54px;top:927.5px;font-size:11.5px;line-height:11.5px;color:#333;font-weight:normal;">页面 1</div>
<svg class="s" style="left:127px;top:929px;" width="8" height="5" viewBox="0 0 8 5"><path d="M0.5 0.5 H7 L3.7 4 Z" fill="#555"/></svg>
<div class="r" style="left:170.5px;top:927px;width:1.1px;height:7px;background:#444;"></div>
<div class="t" style="left:218.7px;top:927.5px;font-size:11.5px;line-height:11.5px;color:#1f9c7c;font-weight:normal;">页面 1</div>
<svg class="s" style="left:1357px;top:926px;" width="12" height="8" viewBox="0 0 12 8"><rect x="1" y="1" width="10" height="9" rx="3" fill="#f3c23a"/></svg>
<div class="t" style="left:1372px;top:927.5px;font-size:11.5px;line-height:11.5px;color:#333;font-weight:normal;">主题计数：&nbsp;38</div>
<svg class="s" style="left:1457px;top:926px;" width="18" height="9" viewBox="0 0 18 9"><rect x="1.5" y="1.5" width="15" height="12" fill="none" stroke="#444" stroke-width="1.1"/><path d="M6 1.5 V13 M11 1.5 V13" stroke="#444" stroke-width="1"/></svg>
<svg class="s" style="left:1486px;top:926px;" width="16" height="9" viewBox="0 0 16 9"><rect x="1.5" y="1.5" width="12" height="12" fill="none" stroke="#444" stroke-width="1.1"/><rect x="4" y="4" width="7" height="4" fill="none" stroke="#444" stroke-width="1"/></svg>
<svg class="s" style="left:1512px;top:926px;" width="16" height="9" viewBox="0 0 16 9"><rect x="1.5" y="1.5" width="13" height="12" fill="none" stroke="#444" stroke-width="1.1"/><path d="M4 4 L6 6 M12 4 L10 6" stroke="#444" stroke-width="1"/></svg>
<div class="r" style="left:1552px;top:932px;width:24px;height:2px;background:#222;"></div>
<div class="r" style="left:1576px;top:932.5px;width:72px;height:1.5px;background:#bbb;"></div>
<svg class="s" style="left:1570px;top:926px;" width="14" height="8" viewBox="0 0 14 8"><circle cx="7" cy="7" r="5.3" fill="#fff" stroke="#222" stroke-width="1.4"/></svg>
<div class="r" style="left:1656px;top:927.5px;width:1.1px;height:7px;background:#444;"></div>
<div class="t" style="left:1672px;top:927.5px;font-size:11.5px;line-height:11.5px;color:#333;font-weight:normal;">100%</div>
<svg class="s" style="left:1705px;top:929px;" width="8" height="5" viewBox="0 0 8 5"><path d="M0.5 0.5 H7 L3.7 4 Z" fill="#555"/></svg>
<svg class="s" style="left:1749px;top:925px;" width="16" height="9" viewBox="0 0 16 9"><path d="M1.5 5 V1.5 H5 M11 1.5 H14.5 V5" fill="none" stroke="#444" stroke-width="1.2"/></svg>
<svg class="s" style="left:1783px;top:925px;" width="16" height="9" viewBox="0 0 16 9"><rect x="1.5" y="1.5" width="12" height="12" fill="none" stroke="#444" stroke-width="1.1"/><path d="M4 6 H11" stroke="#444" stroke-width="1.1"/></svg>
<div class="r" style="left:59px;top:777px;width:470px;height:62.3px;background:#08994f;border-radius:31px"></div>
<div class="t" style="left:87.5px;top:798.3px;font-size:23px;line-height:23px;color:#f4fff8;font-weight:bold;text-shadow:0.45px 0 0 #f4fff8,-0.45px 0 0 #f4fff8">最新右豹地铁小说推文变现，日入2000+</div>
<svg class="s" style="left:40px;top:839px;" width="32" height="32" viewBox="0 0 32 32"><circle cx="16" cy="16" r="14.5" fill="#dff2ec"/><circle cx="16" cy="16" r="12.5" fill="#16977b"/><rect x="7.5" y="12" width="17" height="8.5" rx="4.25" fill="#f5f5f5"/><rect x="9.5" y="13.5" width="13" height="5.5" rx="2.75" fill="#111"/><circle cx="13" cy="16.2" r="1" fill="#ddd"/><circle cx="19" cy="16.2" r="1" fill="#ddd"/></svg>
<svg class="s" style="left:600px;top:840px;" width="640" height="70" viewBox="0 0 640 70"><g transform="translate(12.5,0) scale(1,1)"><text x="0" y="53.5" font-family="Liberation Sans, sans-serif" font-size="36.4" font-weight="bold" letter-spacing="0.55" fill="#111" stroke="#111" stroke-width="5.6" stroke-linejoin="round">呃有些小伙伴做这个项目的收益情况</text><text x="0" y="53.5" font-family="Liberation Sans, sans-serif" font-size="36.4" font-weight="bold" letter-spacing="0.55" fill="#f8d51c" stroke="#f8d51c" stroke-width="1.2" stroke-linejoin="round">呃有些小伙伴做这个项目的收益情况</text></g></svg>
<div class="r" style="left:1732.6px;top:543px;width:40px;height:142px;background:#33373d;border-radius:10px 10px 20px 20px;box-shadow:0 1px 4px rgba(0,0,0,.25)"></div>
<svg class="s" style="left:1744px;top:550px;" width="16" height="21" viewBox="0 0 16 21"><path d="M8 1 L15 3.5 V10 Q15 16 8 19.5 Q1 16 1 10 V3.5 Z" fill="#f08a24"/><text x="8" y="13.5" font-size="9" text-anchor="middle" fill="#fff" font-family="Liberation Sans" font-weight="bold">1</text></svg>
<svg class="s" style="left:1730px;top:575px;" width="45" height="45" viewBox="0 0 45 45"><defs><linearGradient id="rg" x1="0" y1="0" x2="1" y2="0"><stop offset="0" stop-color="#b9b83c"/><stop offset="0.5" stop-color="#63b67e"/><stop offset="1" stop-color="#2aa3a6"/></linearGradient></defs><circle cx="22.5" cy="22" r="19.5" fill="none" stroke="#4a4e55" stroke-width="1.6"/><path d="M3 21 A19.5 19.5 0 0 0 42 21" fill="none" stroke="url(#rg)" stroke-width="2.2"/></svg>
<div class="t" style="left:1739.5px;top:590px;font-size:14.5px;line-height:14.5px;color:#ffffff;font-weight:bold;">51</div>
<div class="t" style="left:1757.5px;top:597px;font-size:8px;line-height:8px;color:#cfcfcf;font-weight:normal;">%</div>
<svg class="s" style="left:1738px;top:627px;" width="7" height="8" viewBox="0 0 7 8"><path d="M3.5 7.5 V3 M1.2 4 L3.5 1 L5.8 4 Z" stroke="#2c9cf0" stroke-width="1.3" fill="#2c9cf0"/></svg>
<div class="t" style="left:1745.5px;top:624.5px;font-size:10.5px;line-height:10.5px;color:#ffffff;font-weight:normal;">34.0</div>
<div class="t" style="left:1748px;top:635px;font-size:8.5px;line-height:8.5px;color:#bbbbbb;font-weight:normal;">K/s</div>
<svg class="s" style="left:1738px;top:655px;" width="7" height="8" viewBox="0 0 7 8"><path d="M3.5 0.5 V5 M1.2 4 L3.5 7 L5.8 4 Z" stroke="#37c26b" stroke-width="1.3" fill="#37c26b"/></svg>
<div class="t" style="left:1747.5px;top:651.5px;font-size:10.5px;line-height:10.5px;color:#ffffff;font-weight:normal;">2.4</div>
<div class="t" style="left:1748px;top:662px;font-size:8.5px;line-height:8.5px;color:#bbbbbb;font-weight:normal;">K/s</div>
<div class="r" style="left:1802.5px;top:368px;width:1px;height:287px;background:#e3e3e3;"></div>
<div class="r" style="left:1650px;top:873.5px;width:160px;height:24px;background:#ffffff;border:1px solid #cddcec;border-right:none"></div>
<svg class="s" style="left:1620px;top:868px;" width="34" height="32" viewBox="0 0 34 32"><g transform="rotate(-12 17 16)"><rect x="4" y="3" width="26" height="26" rx="5" fill="#ec6a24"/><path d="M24 9.5 Q21 7.5 16 8 Q10 8.8 10.5 13 Q11 16 17 16.5 Q23 17 23 20.5 Q22.5 24.5 16 24.5 Q11.5 24.5 9.5 22.5" fill="none" stroke="#fff" stroke-width="3.2" stroke-linecap="round"/></g></svg>
<div class="t" style="left:1657px;top:878.5px;font-size:13px;line-height:13px;color:#1b6fd6;font-weight:bold;">英</div>
<svg class="s" style="left:1680px;top:878px;" width="16" height="14" viewBox="0 0 16 14"><circle cx="3.5" cy="5" r="1.3" fill="#1b6fd6"/><path d="M10 6 Q11 9 8.5 12" stroke="#1b6fd6" stroke-width="2" fill="none" stroke-linecap="round"/></svg>
<svg class="s" style="left:1703px;top:877px;" width="13" height="18" viewBox="0 0 13 18"><rect x="3.5" y="1" width="5.5" height="10" rx="2.75" fill="#1b6fd6"/><path d="M1.5 7.5 Q1.5 13.5 6.25 13.5 Q11 13.5 11 7.5 M6.25 13.5 V16.5" stroke="#1b6fd6" stroke-width="1.4" fill="none"/></svg>
<svg class="s" style="left:1725px;top:879px;" width="17" height="13" viewBox="0 0 17 13"><rect x="1" y="1" width="14.5" height="11" rx="1.5" fill="none" stroke="#1b6fd6" stroke-width="1.5"/><path d="M3.5 4.5 H13 M3.5 7 H13 M5 9.5 H11.5" stroke="#1b6fd6" stroke-width="1.2" stroke-dasharray="1.5 0.9"/></svg>
<svg class="s" style="left:1747px;top:878px;" width="17" height="15" viewBox="0 0 17 15"><path d="M5 1 L1 4 L3 7.5 L4.5 6.5 V14 H12.5 V6.5 L14 7.5 L16 4 L12 1 Q8.5 3.5 5 1 Z" fill="#1b6fd6"/></svg>
<svg class="s" style="left:1770px;top:879px;" width="15" height="14" viewBox="0 0 15 14"><rect x="1" y="1" width="5.5" height="5.5" rx="1.8" fill="#1b6fd6"/><rect x="8" y="1" width="5.5" height="5.5" rx="1.8" fill="#1b6fd6"/><rect x="1" y="8" width="5.5" height="5.5" rx="1.8" fill="#1b6fd6"/><rect x="8" y="8" width="5.5" height="5.5" rx="1.8" fill="#1b6fd6"/></svg>
<svg class="s" style="left:1793px;top:878px;" width="11" height="15" viewBox="0 0 11 15"><path d="M1 4 Q5 1 9 4 V12 H1 Z" fill="#1b6fd6"/><path d="M3 6 L7 10" stroke="#fff" stroke-width="1.2"/></svg>
</body></html>
